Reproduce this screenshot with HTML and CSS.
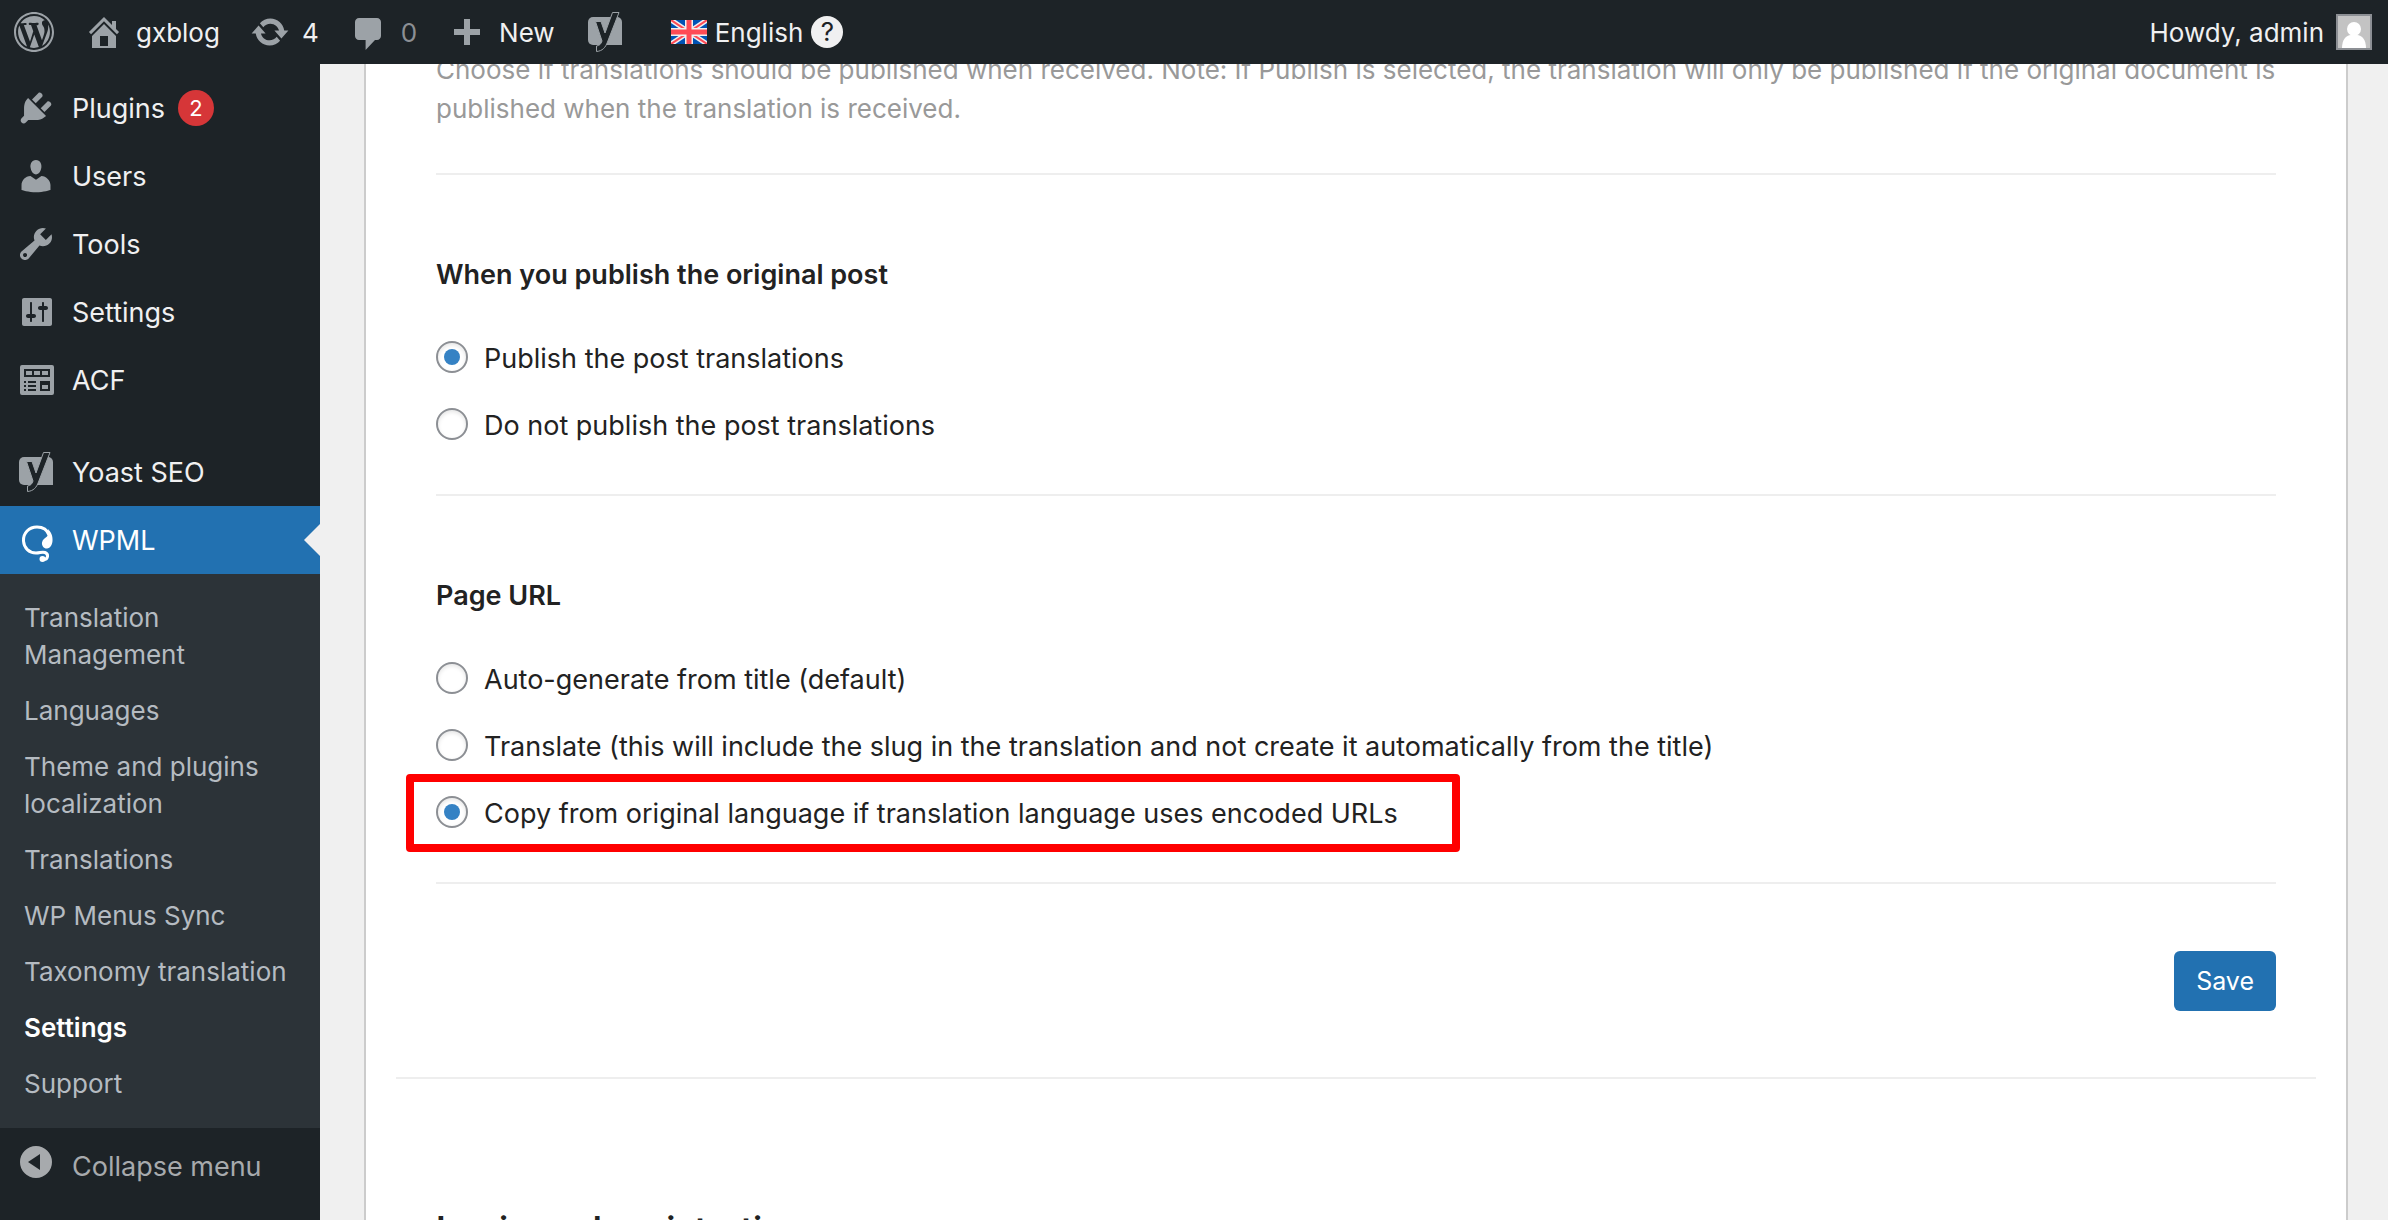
FILE: index.html
```html
<!DOCTYPE html>
<html lang="en">
<head>
    <meta charset="UTF-8">
    <meta name="viewport" content="width=device-width, initial-scale=1.0">
    <title>Settings - gxblog - WordPress</title>
    <link rel="stylesheet" href="styles.css">
</head>
<body>
    <!-- Shared icon shapes -->
    <svg class="sprite" aria-hidden="true">
        <symbol id="icon-yoast" viewBox="0 0 40 40">
            <path d="M8 5h24a5 5 0 0 1 5 5v23H8a5 5 0 0 1-5-5V10a5 5 0 0 1 5-5z"/>
            <path fill="#1d2327" stroke="currentColor" d="M10.500 9.500h5.500l4 11.500L27.500 0.500h6.500L22.500 30c-2 5.500-5 9-11 9.500v-5.500c3-.3 4.500-2 5.500-5z"/>
        </symbol>
    </svg>

    <header class="adminbar">
        <a class="bar-item" href="#" aria-label="About WordPress">
            <svg class="icon" viewBox="0 0 20 20"><path fill-rule="evenodd" d="M20 10c0-5.520-4.480-10-10-10S0 4.480 0 10s4.480 10 10 10 10-4.480 10-10zM10 1.010c4.970 0 8.990 4.020 8.990 8.990s-4.020 8.990-8.990 8.990S1.010 14.970 1.010 10 5.030 1.010 10 1.010zM8.010 14.820L4.960 6.610c.49-.03 1.050-.08 1.050-.08.43-.05.38-1.010-.06-.99 0 0-1.290.1-2.130.1-.15 0-.33 0-.52-.01 1.440-2.170 3.900-3.600 6.700-3.600 2.090 0 3.990.79 5.410 2.090-.6-.08-1.450.35-1.450 1.420 0 .66.38 1.220.79 1.880.31.54.5 1.220.5 2.210 0 1.340-1.270 4.480-1.270 4.480l-2.710-7.500c.48-.03.75-.16.75-.16.43-.05.38-1.100-.05-1.080 0 0-1.300.11-2.140.11-.78 0-2.110-.11-2.110-.11-.43-.02-.48 1.060-.05 1.080l.84.08 1.120 3.040zm6.020 2.150L16.640 10s.67-1.690.39-3.810c.63 1.140.94 2.420.94 3.810 0 2.960-1.560 5.580-3.940 6.970zM2.680 6.770L6.500 17.250c-2.670-1.300-4.470-4.080-4.470-7.250 0-1.160.2-2.230.65-3.230zm7.450 4.530l2.290 6.250c-.75.27-1.570.42-2.420.42-.72 0-1.410-.11-2.060-.3z"/></svg>
        </a>
        <a class="bar-item site" href="#">
            <svg class="icon" viewBox="0 0 20 20"><path d="M16 8.500l1.530 1.530-1.060 1.060L10 4.600l-6.470 6.490-1.060-1.060L10 2.500l4 4v-2h2v4zm-6-2.460l6 5.990V18H4v-5.970zM12 17v-5H8v5h4z"/></svg>
            <span>gxblog</span>
        </a>
        <a class="bar-item updates" href="#">
            <svg class="icon" viewBox="0 0 20 20"><path d="M10.200 3.280c3.530 0 6.430 2.610 6.920 6h2.080l-3.500 4-3.500-4h2.320c-.45-1.970-2.210-3.450-4.320-3.450-1.450 0-2.730.71-3.540 1.780L4.950 5.660C6.230 4.200 8.110 3.280 10.200 3.280zm-.4 13.440c-3.520 0-6.430-2.610-6.920-6H.8l3.500-4c1.170 1.330 2.330 2.670 3.500 4H5.480c.45 1.970 2.210 3.450 4.320 3.450 1.450 0 2.730-.71 3.540-1.780l1.710 1.950c-1.280 1.460-3.150 2.380-5.250 2.380z"/></svg>
            <span>4</span>
        </a>
        <a class="bar-item comments" href="#">
            <svg class="icon" viewBox="0 0 20 20"><path d="M5 3h9c1.100 0 2 .9 2 2v7c0 1.100-.9 2-2 2h-1l-4.700 5v-5H5c-1.100 0-2-.9-2-2V5c0-1.100.9-2 2-2z"/></svg>
            <span class="muted">0</span>
        </a>
        <a class="bar-item new" href="#">
            <svg class="icon" viewBox="0 0 40 40"><path d="M17 7h6v10h10v6H23v10h-6V23H7v-6h10z"/></svg>
            <span>New</span>
        </a>
        <a class="bar-item seo" href="#" aria-label="SEO">
            <svg class="icon"><use href="#icon-yoast"/></svg>
        </a>
        <a class="bar-item language" href="#">
            <svg class="flag" viewBox="0 0 36 24">
                <path fill="#0052b4" d="M0 0h36v24H0z"/>
                <path stroke="#f0f0f0" stroke-width="5" d="M0 0l36 24M36 0L0 24"/>
                <path stroke="#ff4b55" stroke-width="2" d="M0 0l36 24M36 0L0 24"/>
                <path stroke="#f0f0f0" stroke-width="8" d="M18 0v24M0 12h36"/>
                <path stroke="#ff4b55" stroke-width="5" d="M18 0v24M0 12h36"/>
            </svg>
            <span>English</span>
            <span class="help">?</span>
        </a>
        <a class="bar-item account" href="#">
            <span>Howdy, admin</span>
            <svg class="avatar" viewBox="0 0 32 32">
                <path fill="#c3c3c3" d="M0 0h32v32H0z"/>
                <circle cx="16" cy="13" r="7" fill="#fff"/>
                <path fill="#fff" d="M4 32c0-8 4-13 9-13h6c5 0 9 5 9 13z"/>
            </svg>
        </a>
    </header>

    <div class="layout">
        <nav class="sidebar">
            <ul class="menu">
                <li><a class="menu-link" href="#">
                    <svg class="icon" viewBox="0 0 20 20"><path d="M13.110 4.360L9.870 7.600 8 5.730l3.240-3.240c.35-.34 1.050-.2 1.560.32.52.51.66 1.210.31 1.550zm-8 1.770l.91-1.120 9.010 9.010-1.190.84c-.71.71-2.630 1.160-3.820 1.160H6.140L4.900 17.260c-.59.59-1.540.59-2.120 0-.59-.58-.59-1.530 0-2.120l1.240-1.240v-3.880c0-1.130.4-3.190 1.090-3.890zm7.260 3.970l3.240-3.240c.34-.35 1.040-.21 1.550.31.52.51.66 1.210.31 1.550l-3.240 3.250z"/></svg>
                    <span>Plugins</span>
                    <span class="badge">2</span>
                </a></li>
                <li><a class="menu-link" href="#">
                    <svg class="icon" viewBox="0 0 20 20"><path d="M10 9.250c-2.270 0-2.730-3.440-2.730-3.440C7 4.020 7.820 2 9.970 2c2.160 0 2.980 2.020 2.710 3.810 0 0-.41 3.440-2.680 3.440zm0 2.570L12.720 10c2.390 0 4.520 2.330 4.520 4.530v2.490s-3.650 1.130-7.240 1.130c-3.650 0-7.240-1.130-7.240-1.130v-2.490c0-2.250 1.940-4.480 4.470-4.480z"/></svg>
                    <span>Users</span>
                </a></li>
                <li><a class="menu-link" href="#">
                    <svg class="icon" viewBox="0 0 20 20"><path d="M16.680 9.770c-1.340 1.340-3.300 1.670-4.950.99l-5.410 6.520c-.99.99-2.590.99-3.580 0s-.99-2.590 0-3.570l6.520-5.420c-.68-1.650-.35-3.610.99-4.950 1.280-1.280 3.120-1.620 4.720-1.060l-2.890 2.890 2.820 2.820 2.860-2.870c.53 1.580.18 3.390-1.080 4.650zM3.810 16.210c.4.39 1.040.39 1.430 0 .4-.4.4-1.040 0-1.430-.39-.4-1.030-.4-1.430 0-.39.39-.39 1.030 0 1.430z"/></svg>
                    <span>Tools</span>
                </a></li>
                <li><a class="menu-link" href="#">
                    <svg class="icon" viewBox="0 0 20 20"><path d="M18 16V4c0-.55-.45-1-1-1H4c-.55 0-1 .45-1 1v12c0 .55.45 1 1 1h13c.55 0 1-.45 1-1zM8 11h1c.55 0 1 .45 1 1s-.45 1-1 1H8v1.500c0 .28-.22.5-.5.5s-.5-.22-.5-.5V13H6c-.55 0-1-.45-1-1s.45-1 1-1h1V5.500c0-.28.22-.5.5-.5s.5.22.5.5V11zm5-2h-1c-.55 0-1-.45-1-1s.45-1 1-1h1V5.500c0-.28.22-.5.5-.5s.5.22.5.5V7h1c.55 0 1 .45 1 1s-.45 1-1 1h-1v5.500c0 .28-.22.5-.5.5s-.5-.22-.5-.5V9z"/></svg>
                    <span>Settings</span>
                </a></li>
                <li><a class="menu-link" href="#">
                    <svg class="icon" viewBox="0 0 40 40"><path fill-rule="evenodd" d="M6 5h30a2 2 0 0 1 2 2v26a2 2 0 0 1-2 2H6a2 2 0 0 1-2-2V7a2 2 0 0 1 2-2zM8 9v8h26V9zm2 2h6v4h-6zm8 0h6v4h-6zm8 0h6v4h-6zM8 21v2h2v-2zm4 0v2h8v-2zm-4 4v2h2v-2zm4 0v2h8v-2zm-4 4v2h2v-2zm4 0v2h8v-2zm12-8v10h10V21zm2 4h6v4h-6z"/></svg>
                    <span>ACF</span>
                </a></li>
                <li class="separator"></li>
                <li><a class="menu-link" href="#">
                    <svg class="icon"><use href="#icon-yoast"/></svg>
                    <span>Yoast SEO</span>
                </a></li>
                <li>
                    <a class="menu-link current" href="#">
                        <svg class="icon" viewBox="0 0 40 40">
                            <path fill="none" stroke="#fff" stroke-width="3" stroke-linecap="round" d="M33 15C31 9 27 7 21 7 13 7 7 13 7.500 21c.5 7 5.500 12 12.500 12 4 0 6-1.500 9-.5 4 1.500 3 7-1 7"/>
                            <path d="M32 9c3 3 5 7 4.500 12-.4 4-2 7-5.500 7.500-3 .3-5.500-2.500-5-6 .5-3 3-4.500 5-6 1.500-1.500 1.500-4 1-7.500z"/>
                            <circle cx="26.500" cy="39" r="3"/>
                        </svg>
                        <span>WPML</span>
                    </a>
                    <ul class="submenu">
                        <li><a href="#">Translation Management</a></li>
                        <li><a href="#">Languages</a></li>
                        <li><a href="#">Theme and plugins localization</a></li>
                        <li><a href="#">Translations</a></li>
                        <li><a href="#">WP Menus Sync</a></li>
                        <li><a href="#">Taxonomy translation</a></li>
                        <li><a class="active" href="#">Settings</a></li>
                        <li><a href="#">Support</a></li>
                    </ul>
                </li>
            </ul>
            <button type="button" class="collapse">
                <svg class="icon" viewBox="0 0 40 40"><path fill-rule="evenodd" d="M20 4a16 16 0 1 0 0 32 16 16 0 0 0 0-32zm4 8v16l-12-8z"/></svg>
                <span>Collapse menu</span>
            </button>
        </nav>

        <main class="content">
            <form class="card">
                <section class="panel">
                    <p class="hint">Choose if translations should be published when received. Note: If Publish is selected, the translation will only be published if the original document is published when the translation is received.</p>
                    <hr>

                    <h4>When you publish the original post</h4>
                    <div class="options">
                        <label class="option"><input type="radio" name="publish" checked> <span>Publish the post translations</span></label>
                        <label class="option"><input type="radio" name="publish"> <span>Do not publish the post translations</span></label>
                    </div>
                    <hr>

                    <h4>Page URL</h4>
                    <div class="options">
                        <label class="option"><input type="radio" name="page_url"> <span>Auto-generate from title (default)</span></label>
                        <label class="option"><input type="radio" name="page_url"> <span>Translate (this will include the slug in the translation and not create it automatically from the title)</span></label>
                        <label class="option highlight"><input type="radio" name="page_url" checked> <span>Copy from original language if translation language uses encoded URLs</span></label>
                    </div>
                    <hr>

                    <div class="actions">
                        <button type="submit" class="btn">Save</button>
                    </div>
                </section>
                <section class="panel next">
                    <h3>Login and registration</h3>
                </section>
            </form>
        </main>
    </div>
</body>
</html>
```
FILE: styles.css
```css
* {
    box-sizing: border-box;
}
body {
    margin: 0;
    font-family: Inter, "Liberation Sans", sans-serif;
    font-size: 27px;
    color: #222;
    background-color: #f0f0f0;
}
a {
    color: inherit;
    text-decoration: none;
}
ul {
    list-style: none;
    margin: 0;
    padding: 0;
}
.sprite {
    display: none;
}
.icon {
    flex: none;
    width: 40px;
    height: 40px;
    fill: currentColor;
    color: #9ca2a7;
}

/* Admin bar */
.adminbar {
    position: fixed;
    top: 0;
    left: 0;
    right: 0;
    z-index: 10;
    display: flex;
    align-items: center;
    height: 64px;
    padding: 0 16px 0 14px;
    background-color: #1d2327;
    color: #f0f0f1;
    font-size: 26px;
}
.bar-item {
    display: flex;
    align-items: center;
    gap: 12px;
    margin-right: 30px;
}
.muted {
    color: #8c8f94;
}
.flag {
    width: 36px;
    height: 24px;
}
.language {
    gap: 8px;
    margin-left: 16px;
}
.help {
    width: 32px;
    height: 32px;
    border-radius: 50%;
    background-color: #f0f0f1;
    color: #1d2327;
    line-height: 32px;
    text-align: center;
}
.account {
    margin-left: auto;
    margin-right: 0;
}
.avatar {
    width: 36px;
    height: 36px;
    border: 2px solid #8c8f94;
}

/* Layout */
.layout {
    display: flex;
    height: 100vh;
    overflow: hidden;
}
.sidebar {
    flex: none;
    width: 320px;
    padding-top: 74px;
    background-color: #1d2327;
    color: #f0f0f1;
}
.menu-link {
    position: relative;
    display: flex;
    align-items: center;
    gap: 16px;
    height: 68px;
    padding: 0 16px;
}
.separator {
    height: 24px;
}
.badge {
    width: 36px;
    height: 36px;
    margin-left: -3px;
    border-radius: 50%;
    background-color: #d63638;
    color: #fff;
    font-size: 22px;
    line-height: 36px;
    text-align: center;
}
.current {
    background-color: #2271b1;
    color: #fff;
}
.current .icon {
    color: #fff;
    overflow: visible;
}
.current::after {
    content: "";
    position: absolute;
    right: 0;
    top: 18px;
    border: 16px solid transparent;
    border-left-width: 0;
    border-right-color: #f0f0f0;
}
.submenu {
    padding: 15px 0 17px;
    background-color: #2c3338;
    color: #b5bbc1;
    font-size: 26px;
    line-height: 37px;
}
.submenu a {
    display: block;
    padding: 10px 24px 9px;
}
.submenu .active {
    color: #fff;
    font-weight: 600;
}
.collapse {
    display: flex;
    align-items: center;
    gap: 16px;
    padding: 14px 16px;
    border: 0;
    background: none;
    color: #a7aaad;
    font: inherit;
}
.collapse .icon {
    margin-bottom: 8px;
    color: #a7aaad;
}

/* Settings card */
.content {
    flex: 1;
    padding: 0 40px 0 44px;
}
.card {
    padding: 0 30px;
    border: 2px solid #ccc;
    border-width: 0 2px;
    background-color: #fff;
}
.panel {
    padding: 50px 40px 66px;
}
.next {
    border-top: 2px solid #eee;
    padding: 129px 40px;
}
.hint {
    margin: 0 0 45px;
    color: #999;
    font-size: 26px;
    line-height: 39px;
}
hr {
    margin: 0;
    border: 0;
    border-top: 2px solid #eee;
}
h4 {
    margin: 79px 0 29px;
    font-size: 27px;
    font-weight: 600;
    line-height: 42px;
}
h3 {
    margin: 0;
    font-size: 35px;
    font-weight: 600;
    line-height: 42px;
}
.options {
    margin-bottom: 35px;
}
.option {
    position: relative;
    display: flex;
    align-items: center;
    gap: 16px;
    width: fit-content;
    height: 67px;
}
.option input {
    appearance: none;
    display: grid;
    place-items: center;
    flex: none;
    width: 32px;
    height: 32px;
    margin: 0 0 4px;
    border: 2px solid #8c8f94;
    border-radius: 50%;
    background-color: #fff;
    box-shadow: inset 0 2px 4px rgba(0, 0, 0, 0.1);
}
.option input:checked::before {
    content: "";
    width: 16px;
    height: 16px;
    border-radius: 50%;
    background-color: #3582c4;
}
.highlight::after {
    content: "";
    position: absolute;
    inset: -6px -62px -5px -30px;
    border: 8px solid #f00;
    border-radius: 4px;
}
.actions {
    display: flex;
    justify-content: flex-end;
    margin-top: 67px;
}
.btn {
    height: 60px;
    padding: 0 22px;
    border: 0;
    border-radius: 6px;
    background-color: #2271b1;
    color: #fff;
    font-family: inherit;
    font-size: 25px;
}
```
